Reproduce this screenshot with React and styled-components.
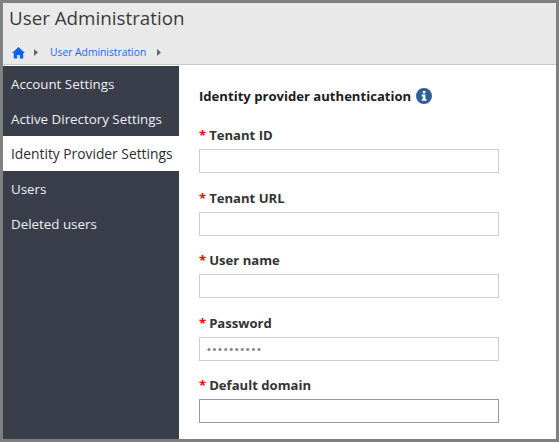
import React from 'react';
import styled, { createGlobalStyle } from 'styled-components';

const Global = createGlobalStyle`
  html, body { margin: 0; padding: 0; }
  body { font-family: "Open Sans", "Noto Sans", "Liberation Sans", sans-serif; }
  * { box-sizing: border-box; }
`;
const Frame = styled.div`
  width: 559px; height: 442px; border: 3px solid #808080; background: #fff;
  display: flex; flex-direction: column; overflow: hidden;
`;
const Header = styled.header`
  height: 62px; flex: none; background: #e9e9e9; border-bottom: 1px solid #c8c8c8;
  display: flex; flex-direction: column; padding: 0 0 0 6px;
`;
const Title = styled.h1`
  margin: 3px 0 0; font-size: 18.8px; line-height: 24px; font-weight: 400; color: #3a3a3a;
`;
const Crumbs = styled.nav`
  margin-top: 14px; display: flex; align-items: center; height: 16px; padding-left: 3px;
`;
const Crumb = styled.a`
  font-size: 10.3px; color: #1a66ff; margin: 0 11px 0 12px; white-space: nowrap;
`;
const HomeArrowGap = styled.span`
  width: 9px;
`;
const Body = styled.div`
  flex: 1; display: flex; min-height: 0; margin-top: 1px;
`;
const Side = styled.aside`
  width: 176px; flex: none; background: #3a3e4b;
`;
const Item = styled.div`
  height: 35px; padding-left: 8px; display: flex; align-items: center; white-space: nowrap;
  font-size: ${p => p.$active ? '13.8px' : '13.35px'};
  color: ${p => p.$active ? '#2d2d2d' : '#eef0f4'};
  background: ${p => p.$active ? '#fff' : 'transparent'};
`;
const Main = styled.main`
  flex: 1; padding: 21px 0 0 20px;
`;
const Heading = styled.h2`
  margin: 0 0 21px; display: flex; align-items: center; gap: 5px;
  font-size: 13.1px; line-height: 18px; font-weight: 700; color: #1c1c1c;
`;
const Field = styled.div`
  height: 62.6px; display: flex; flex-direction: column;
`;
const Label = styled.label`
  font-size: 13.1px; line-height: 18px; font-weight: 700; color: #333; margin-bottom: 5px;
  &::before { content: "*"; color: #f00; margin-right: 3px; }
`;
const Input = styled.input`
  width: 300px; height: 24px; padding: 0 7px; background: #fff; outline: none; border-radius: 0;
  border: 1px solid ${p => p.$focus ? '#999' : '#cfcfcf'};
  font-family: "Liberation Sans", sans-serif; font-size: 11px; color: #808080; letter-spacing: 1.7px;
`;

const Home = () => (
  <svg width="13" height="13" viewBox="0 0 13 13" aria-hidden="true">
    <path d="M6.5 1 L13 7 L11.2 7 L11.2 12.5 L7.8 12.5 L7.8 9 L5.2 9 L5.2 12.5 L1.8 12.5 L1.8 7 L0 7 Z" fill="#0a63e8" />
  </svg>
);
const Arrow = () => (
  <svg width="4" height="7" viewBox="0 0 4 7" aria-hidden="true">
    <path d="M0 0 L4 3.5 L0 7 Z" fill="#666" />
  </svg>
);
const Info = () => (
  <svg width="16" height="16" viewBox="0 0 16 16" aria-hidden="true">
    <circle cx="8" cy="8" r="8" fill="#2f6095" />
    <rect x="6.8" y="3" width="2.6" height="2.4" fill="#fff" />
    <path d="M5.8 6.6 H9.4 V11 H10.4 V12.8 H5.8 V11 H6.8 V8.4 H5.8 Z" fill="#fff" />
  </svg>
);

const menu = ['Account Settings', 'Active Directory Settings', 'Identity Provider Settings', 'Users', 'Deleted users'];
const fields = [
  { label: 'Tenant ID' },
  { label: 'Tenant URL' },
  { label: 'User name' },
  { label: 'Password', type: 'password', value: '••••••••••' },
  { label: 'Default domain', focus: true },
];

export default function App() {
  return (
    <>
      <Global />
      <Frame>
        <Header>
          <Title>User Administration</Title>
          <Crumbs>
            <Home />
            <HomeArrowGap />
            <Arrow />
            <Crumb>User Administration</Crumb>
            <Arrow />
          </Crumbs>
        </Header>
        <Body>
          <Side>
            {menu.map(m => <Item key={m} $active={m === 'Identity Provider Settings'}>{m}</Item>)}
          </Side>
          <Main>
            <Heading>Identity provider authentication <Info /></Heading>
            {fields.map(f => (
              <Field key={f.label}>
                <Label>{f.label}</Label>
                <Input $focus={f.focus} type={f.type || 'text'} defaultValue={f.value || ''} />
              </Field>
            ))}
          </Main>
        </Body>
      </Frame>
    </>
  );
}
